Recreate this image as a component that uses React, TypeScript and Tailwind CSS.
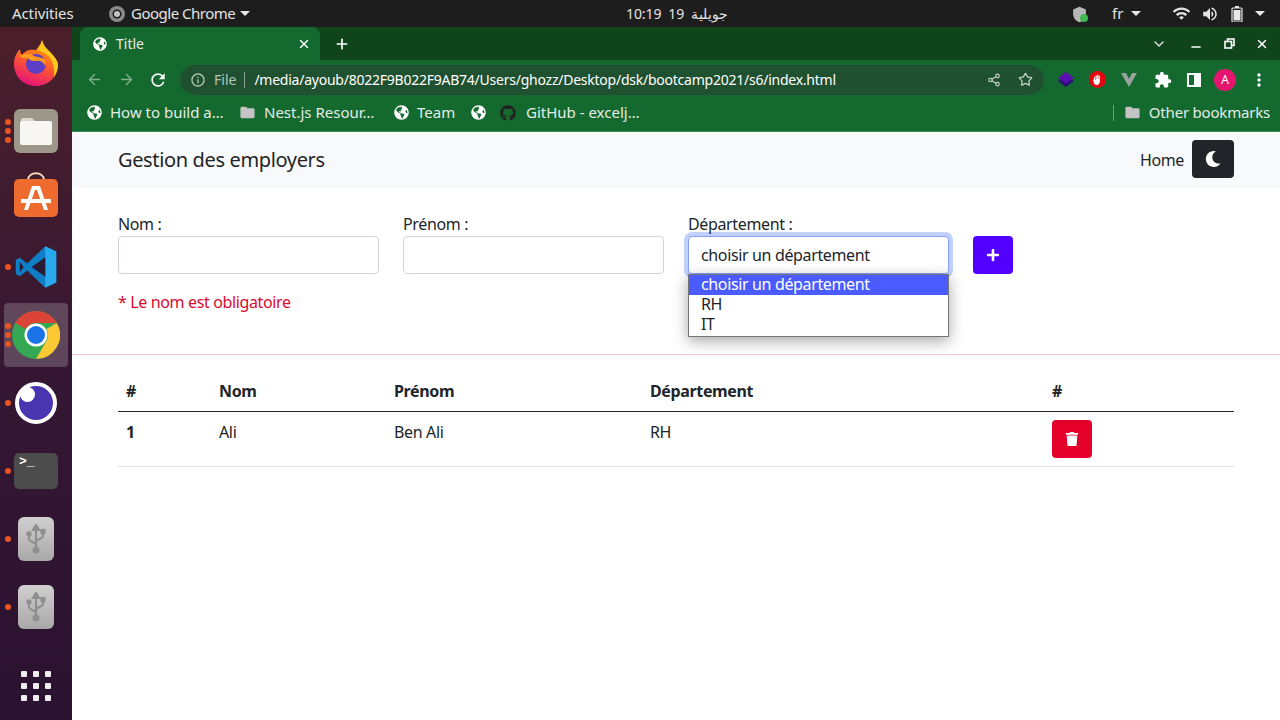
import { ArrowLeft, ArrowRight, ChevronDown, Minus, Plus, Share2, Star, X } from 'lucide-react';
import { FaGithub, FaGlobeAmericas, FaMoon, FaPlus, FaTrash } from 'react-icons/fa';
import { MdExtension, MdFolder, MdInfoOutline, MdMoreVert, MdRefresh, MdShield, MdVolumeUp, MdWifi } from 'react-icons/md';

const font = 'font-["Noto_Sans","Liberation_Sans",sans-serif]';

function Caret() {
  return <span className="block h-0 w-0 border-x-[5px] border-t-[5px] border-x-transparent border-t-[#e8e8e8]" />;
}

function TopBar() {
  return (
    <div className="flex h-[27px] shrink-0 items-center whitespace-nowrap bg-[#1d1d1d] text-[15px] text-[#e4e4e4]">
      <span className="ml-3 w-[97px] tracking-[-0.1px]">Activities</span>
      <svg width="16" height="16" viewBox="0 0 16 16" className="shrink-0">
        <circle cx="8" cy="8" r="8" fill="#8a8a8a" />
        <circle cx="8" cy="8" r="4.5" fill="#1d1d1d" />
        <circle cx="8" cy="8" r="3" fill="#c4c4c4" />
      </svg>
      <span className="ml-[6px] w-[104px] tracking-[-0.5px]">Google Chrome</span>
      <span className="ml-[5px]"><Caret /></span>
      <div className="ml-[376px] flex w-[103px] gap-[7px] whitespace-pre text-[14px] tracking-[-0.1px]">
        <span>10:19</span>
        <span>19</span>
        <span dir="rtl">جويلية</span>
      </div>
      <div className="relative ml-[342px] h-4 w-4">
        <MdShield size={17} className="text-[#b8b8b8]" />
        <span className="absolute -right-[1px] bottom-0 h-2 w-2 rounded-full bg-[#3fb950]" />
      </div>
      <span className="ml-[25px] w-[12px]">fr</span>
      <span className="ml-[7px]"><Caret /></span>
      <MdWifi size={19} className="ml-[31px]" />
      <MdVolumeUp size={18} className="ml-[10px]" />
      <svg width="12" height="16" viewBox="0 0 12 16" className="ml-[12px]">
        <rect x="4" y="0" width="4" height="2" fill="#e8e8e8" />
        <rect x="1" y="2" width="10" height="14" rx="1" fill="none" stroke="#e8e8e8" strokeWidth="1.2" />
        <rect x="2.5" y="4" width="7" height="10.5" fill="#e8e8e8" />
      </svg>
      <span className="ml-[12px]"><Caret /></span>
    </div>
  );
}

function DockSlot({ dots = 0, active = false, children }: { dots?: number; active?: boolean; children: React.ReactNode }) {
  return (
    <div className="relative flex h-[68px] items-center justify-center">
      {active && <div className="absolute inset-[2px] left-1 right-1 rounded-[4px] bg-white/20" />}
      {dots > 0 && (
        <div className="absolute left-[5px] top-1/2 flex -translate-y-1/2 flex-col gap-[3px]">
          {Array.from({ length: dots }).map((_, i) => (
            <span key={i} className="h-[6px] w-[6px] rounded-full bg-[#e95420]" />
          ))}
        </div>
      )}
      <div className="relative">{children}</div>
    </div>
  );
}

function FirefoxIcon() {
  return (
    <svg width="48" height="48" viewBox="0 0 48 48" className="block">
      <defs>
        <linearGradient id="ff" x1="0.7" y1="0" x2="0.3" y2="1">
          <stop offset="0" stopColor="#ffb000" />
          <stop offset="0.5" stopColor="#ff5a2a" />
          <stop offset="1" stopColor="#e3107f" />
        </linearGradient>
      </defs>
      <path d="M30 1c1 5 4 8 8 12 6 6 8 10 8 13 0 12-10 21-22 21S2 38 2 25C2 18 5 13 8 10c0 3 1 5 2 6 3-5 9-6 14-5 2-3 5-6 6-10z" fill="url(#ff)" />
      <path d="M30 1c1 5 4 8 8 12 6 6 8 10 8 13 0 5-2 9-4 12 1-9-1-18-8-23-3-2-6-3-8-4 1-3 4-6 4-10z" fill="#ffc91f" />
      <circle cx="24" cy="25" r="10" fill="#5b3fc4" />
      <path d="M7 17c6-3 11-3 15 0 5 2 10 1 11 4 1 2 1 4 0 6-1-4-5-6-10-5-4 0-6-1-7-3-3 1-6 0-9-2z" fill="#ff9a1f" />
    </svg>
  );
}

function FilesIcon() {
  return (
    <div className="flex h-[44px] w-[44px] items-center justify-center rounded-[6px] bg-[#9c9788]">
      <svg width="32" height="28" viewBox="0 0 32 28">
        <path d="M1 3a2 2 0 0 1 2-2h9l4 4h-15z" fill="#ddd9cf" />
        <rect x="0" y="4" width="32" height="24" rx="2" fill="#f8f6f2" />
      </svg>
    </div>
  );
}

function StoreIcon() {
  return (
    <svg width="46" height="48" viewBox="0 0 46 48" className="-mt-[6px] block">
      <path d="M15 8c0-9 16-9 16 0" fill="none" stroke="#f4d9b8" strokeWidth="2" />
      <rect x="1" y="7" width="44" height="38" rx="5" fill="#ee6a2e" />
      <path d="M19 14h8l8 24h-4l-7-20h-2l-7 20h-4z" fill="#fff" />
      <rect x="8" y="27" width="30" height="4" fill="#fff" />
    </svg>
  );
}

function VsCodeIcon() {
  return (
    <svg width="44" height="44" viewBox="0 0 100 100" className="block">
      <path d="M71 3 96 15v70L71 97 30 58 13 71 4 66V34l9-5 17 13z" fill="#0e7fc6" />
      <path d="M71 3 96 15v70L71 97z" fill="#29a9ee" />
      <path d="M71 28 40 50l31 22z" fill="#2b1a33" />
      <path d="M13 38l9 12-9 12z" fill="#2b1a33" />
    </svg>
  );
}

function ChromeIcon() {
  return (
    <svg width="48" height="48" viewBox="0 0 48 48" className="block">
      <circle cx="24" cy="24" r="24" fill="#34a853" />
      <path d="M24 0a24 24 0 0 1 20.8 12H24a12 12 0 0 0-10.4 6L3.2 12A24 24 0 0 1 24 0z" fill="#db4437" />
      <path d="M44.8 12A24 24 0 0 1 24 48l10.4-18a12 12 0 0 0 0-12z" fill="#fcc934" />
      <circle cx="24" cy="24" r="11.5" fill="#fff" />
      <circle cx="24" cy="24" r="9" fill="#1a73e8" />
    </svg>
  );
}

function LensIcon() {
  return (
    <div className="relative h-[42px] w-[42px] rounded-full border-[4px] border-white bg-[#4a35b0]">
      <span className="absolute left-[1px] top-[1px] h-[15px] w-[15px] rounded-full bg-white" />
    </div>
  );
}

function TerminalIcon() {
  return (
    <div className="h-[36px] w-[44px] rounded-[5px] bg-[#4c4c4c] pl-[5px] pt-[1px] font-['Liberation_Mono',monospace] text-[13px] font-bold leading-[16px] text-white">
      &gt;_
    </div>
  );
}

function UsbIcon() {
  return (
    <div className="flex h-[44px] w-[36px] items-center justify-center rounded-[6px] bg-gradient-to-b from-[#d0d0d0] to-[#a8a8a8]">
      <svg width="20" height="30" viewBox="0 0 20 30" fill="none" stroke="#8f8f8f" strokeWidth="2.2">
        <path d="M10 5v21" />
        <path d="M10 1 7 6h6z" fill="#8f8f8f" />
        <path d="M3 11v4c0 3 7 3 7 6M17 9v3c0 3-7 3-7 6" />
        <circle cx="3" cy="10" r="1.6" fill="#8f8f8f" />
        <rect x="15.5" y="6" width="3" height="3" fill="#8f8f8f" />
        <circle cx="10" cy="26" r="2.4" fill="#8f8f8f" />
      </svg>
    </div>
  );
}

function Dock() {
  return (
    <div className="flex w-[72px] shrink-0 flex-col bg-gradient-to-b from-[#4b1f2a] via-[#351733] to-[#2a1230] pt-[2px]">
      <DockSlot><FirefoxIcon /></DockSlot>
      <DockSlot dots={3}><FilesIcon /></DockSlot>
      <DockSlot><StoreIcon /></DockSlot>
      <DockSlot dots={1}><VsCodeIcon /></DockSlot>
      <DockSlot dots={3} active><ChromeIcon /></DockSlot>
      <DockSlot dots={1}><LensIcon /></DockSlot>
      <DockSlot dots={1}><TerminalIcon /></DockSlot>
      <DockSlot dots={1}><UsbIcon /></DockSlot>
      <DockSlot dots={1}><UsbIcon /></DockSlot>
      <div className="mt-[30px] grid w-[30px] grid-cols-3 gap-[6px] self-center">
        {Array.from({ length: 9 }).map((_, i) => (
          <span key={i} className="h-[6px] w-[6px] rounded-[1px] bg-[#efefef]" />
        ))}
      </div>
    </div>
  );
}

function TabStrip() {
  return (
    <div className="flex h-[33px] shrink-0 items-end bg-[#10451c] pl-2 text-white">
      <div className="flex h-[33px] w-[240px] items-center rounded-t-[8px] bg-[#146a2e] pl-[13px] pr-[9px]">
        <FaGlobeAmericas size={14} />
        <span className="ml-[9px] flex-1 text-[14px] text-[#eaeaea]">Title</span>
        <X size={14} strokeWidth={2.5} />
      </div>
      <div className="ml-[14px] flex h-[33px] items-center"><Plus size={16} strokeWidth={2.5} /></div>
      <div className="ml-auto flex h-[33px] items-center">
        <ChevronDown size={16} strokeWidth={2} className="text-[#e4e4e4]" />
        <Minus size={14} strokeWidth={2.5} className="ml-[22px] mt-[6px]" />
        <svg width="11" height="11" viewBox="0 0 11 11" fill="none" stroke="#fff" strokeWidth="1.6" className="ml-[21px]">
          <rect x="1" y="3.5" width="6.5" height="6.5" />
          <path d="M3.5 3V1H10v6.5H8" />
        </svg>
        <X size={14} strokeWidth={2.5} className="ml-[20px] mr-[11px]" />
      </div>
    </div>
  );
}

function Toolbar() {
  return (
    <div className="flex h-[37px] shrink-0 items-center bg-[#146a2e] pl-[14px] pt-[2px] text-white">
      <ArrowLeft size={17} className="text-[#7fae8d]" />
      <ArrowRight size={17} className="ml-[15px] text-[#7fae8d]" />
      <MdRefresh size={20} className="ml-[13px]" />
      <div className="ml-[12px] flex h-[30px] w-[864px] items-center rounded-full bg-[#1f5030] pl-[10px] pr-[11px]">
        <MdInfoOutline size={16} className="text-[#b4c6ba]" />
        <span className="ml-[8px] text-[14px] text-[#b4c6ba]">File</span>
        <span className="ml-[8px] h-[16px] w-px bg-[#8aa394]" />
        <span className="ml-[9px] flex-1 whitespace-nowrap text-[14px] tracking-[-0.24px] text-white">/media/ayoub/8022F9B022F9AB74/Users/ghozz/Desktop/dsk/bootcamp2021/s6/index.html</span>
        <Share2 size={14} className="text-[#c4d2c9]" />
        <Star size={15} className="ml-[17px] text-[#c4d2c9]" />
      </div>
      <svg width="18" height="18" viewBox="0 0 18 18" className="ml-[13px]">
        <path d="M9 5 17 10 9 16 1 10z" fill="#2f0f7a" />
        <path d="M9 1 17 7 9 12 1 7z" fill="#5a0fb0" />
      </svg>
      <span className="ml-[14px] flex h-[17px] w-[17px] items-center justify-center rounded-full bg-[#e20612]">
        <svg width="9" height="11" viewBox="0 0 9 11" fill="#fff">
          <path d="M1 3h1v3h.5V1.5h1.2V5h.4V.8h1.2V5h.4V1.8h1.2V7c0 2.5-1.5 4-3.3 4S1.5 10 .6 8L0 5.5l1 .2z" />
        </svg>
      </span>
      <svg width="16" height="14" viewBox="0 0 16 14" className="ml-[15px]">
        <path d="M0 0h5l3 6 3-6h5L8 14z" fill="#9aa39d" />
      </svg>
      <MdExtension size={18} className="ml-[17px]" />
      <span className="ml-[15px] flex h-[14px] w-[14px] border-[2px] border-white"><span className="ml-auto h-full w-[5px] bg-white" /></span>
      <span className="ml-[13px] flex h-[22px] w-[22px] items-center justify-center rounded-full bg-[#e6156f] text-[12px] text-white">A</span>
      <MdMoreVert size={20} className="ml-[13px]" />
    </div>
  );
}

function Bookmark({ icon, label, className = '' }: { icon: React.ReactNode; label?: string; className?: string }) {
  return (
    <div className={`flex items-center gap-2 text-[15px] text-[#e6ece8] ${className}`}>
      {icon}
      {label && <span className="whitespace-nowrap">{label}</span>}
    </div>
  );
}

function BookmarksBar() {
  return (
    <div className="flex h-[35px] shrink-0 items-center border-b border-[#3f8a55] bg-[#146a2e] pb-[3px] pl-[15px]">
      <Bookmark className="w-[152px]" icon={<FaGlobeAmericas size={15} className="text-white" />} label="How to build a…" />
      <Bookmark className="w-[155px]" icon={<MdFolder size={17} className="text-[#c4c4c4]" />} label="Nest.js Resour…" />
      <Bookmark className="w-[77px]" icon={<FaGlobeAmericas size={15} className="text-white" />} label="Team" />
      <Bookmark className="w-[29px]" icon={<FaGlobeAmericas size={15} className="text-white" />} />
      <Bookmark className="gap-[10px]" icon={<FaGithub size={16} className="text-[#222]" />} label="GitHub - excelj…" />
      <span className="ml-auto h-[16px] w-px bg-[#6c9c7b]" />
      <Bookmark className="ml-[10px] mr-[10px] tracking-[-0.2px]" icon={<MdFolder size={17} className="text-[#c4c4c4]" />} label="Other bookmarks" />
    </div>
  );
}

function Page() {
  return (
    <div className="flex-1 bg-white text-[16px] leading-[24px] tracking-[-0.36px] text-[#212529]">
      <nav className="flex h-[56px] items-center bg-[#f8f9fa] pl-[46px] pr-[46px]">
        <span className="text-[20px]">Gestion des employers</span>
        <span className="ml-auto">Home</span>
        <button className="-mt-[2px] ml-2 flex h-[38px] w-[42px] items-center justify-center rounded-[4px] bg-[#212529] text-white">
          <FaMoon size={16} />
        </button>
      </nav>

      <form className="px-[46px] pt-[24px]">
        <div className="grid grid-cols-[261px_261px_261px_40px] items-end gap-x-6">
          <div>
            <label className="block">Nom :</label>
            <div className="h-[38px] rounded-[4px] border border-[#ced4da] bg-white" />
          </div>
          <div>
            <label className="block">Prénom :</label>
            <div className="h-[38px] rounded-[4px] border border-[#ced4da] bg-white" />
          </div>
          <div className="relative">
            <label className="block">Département :</label>
            <div className="flex h-[38px] items-center rounded-[4px] border border-[#86a0fe] bg-white pl-[12px] shadow-[0_0_0_4px_#c2d0ff]">
              choisir un département
            </div>
            <div className="absolute left-0 right-0 top-[62px] z-10 border border-[#767676] bg-white pb-[1px] leading-[18px] shadow-[0_4px_14px_rgba(0,0,0,0.35)]">
              <div className="h-[20px] bg-[#4a5cff] pl-[12px] text-white">choisir un département</div>
              <div className="h-[20px] pl-[12px]">RH</div>
              <div className="h-[20px] pl-[12px]">IT</div>
            </div>
          </div>
          <button type="button" className="flex h-[38px] items-center justify-center rounded-[4px] bg-[#5200ff] text-white">
            <FaPlus size={14} />
          </button>
        </div>
        <p className="mt-4 text-[#dc0a2d]">* Le nom est obligatoire</p>
      </form>

      <hr className="mt-10 border-[#f8c9d0]" />

      <div className="mx-[46px] mt-[16px]">
        <table className="w-[1116px] table-fixed border-collapse text-left">
          <thead>
            <tr className="border-b border-[#212529]">
              <th className="w-[93px] p-2 font-bold">#</th>
              <th className="w-[175px] p-2 font-bold">Nom</th>
              <th className="w-[256px] p-2 font-bold">Prénom</th>
              <th className="w-[402px] p-2 font-bold">Département</th>
              <th className="p-2 font-bold">#</th>
            </tr>
          </thead>
          <tbody>
            <tr className="border-b border-[#dee2e6] align-top">
              <td className="p-2 font-bold">1</td>
              <td className="p-2">Ali</td>
              <td className="p-2">Ben Ali</td>
              <td className="p-2">RH</td>
              <td className="p-2">
                <button className="flex h-[38px] w-[40px] items-center justify-center rounded-[4px] bg-[#e4002b] text-white">
                  <FaTrash size={14} />
                </button>
              </td>
            </tr>
          </tbody>
        </table>
      </div>
    </div>
  );
}

export default function App() {
  return (
    <div className={`flex h-[720px] w-[1280px] flex-col overflow-hidden ${font}`}>
      <TopBar />
      <div className="flex min-h-0 flex-1">
        <Dock />
        <div className="flex min-w-0 flex-1 flex-col">
          <TabStrip />
          <Toolbar />
          <BookmarksBar />
          <Page />
        </div>
      </div>
    </div>
  );
}
